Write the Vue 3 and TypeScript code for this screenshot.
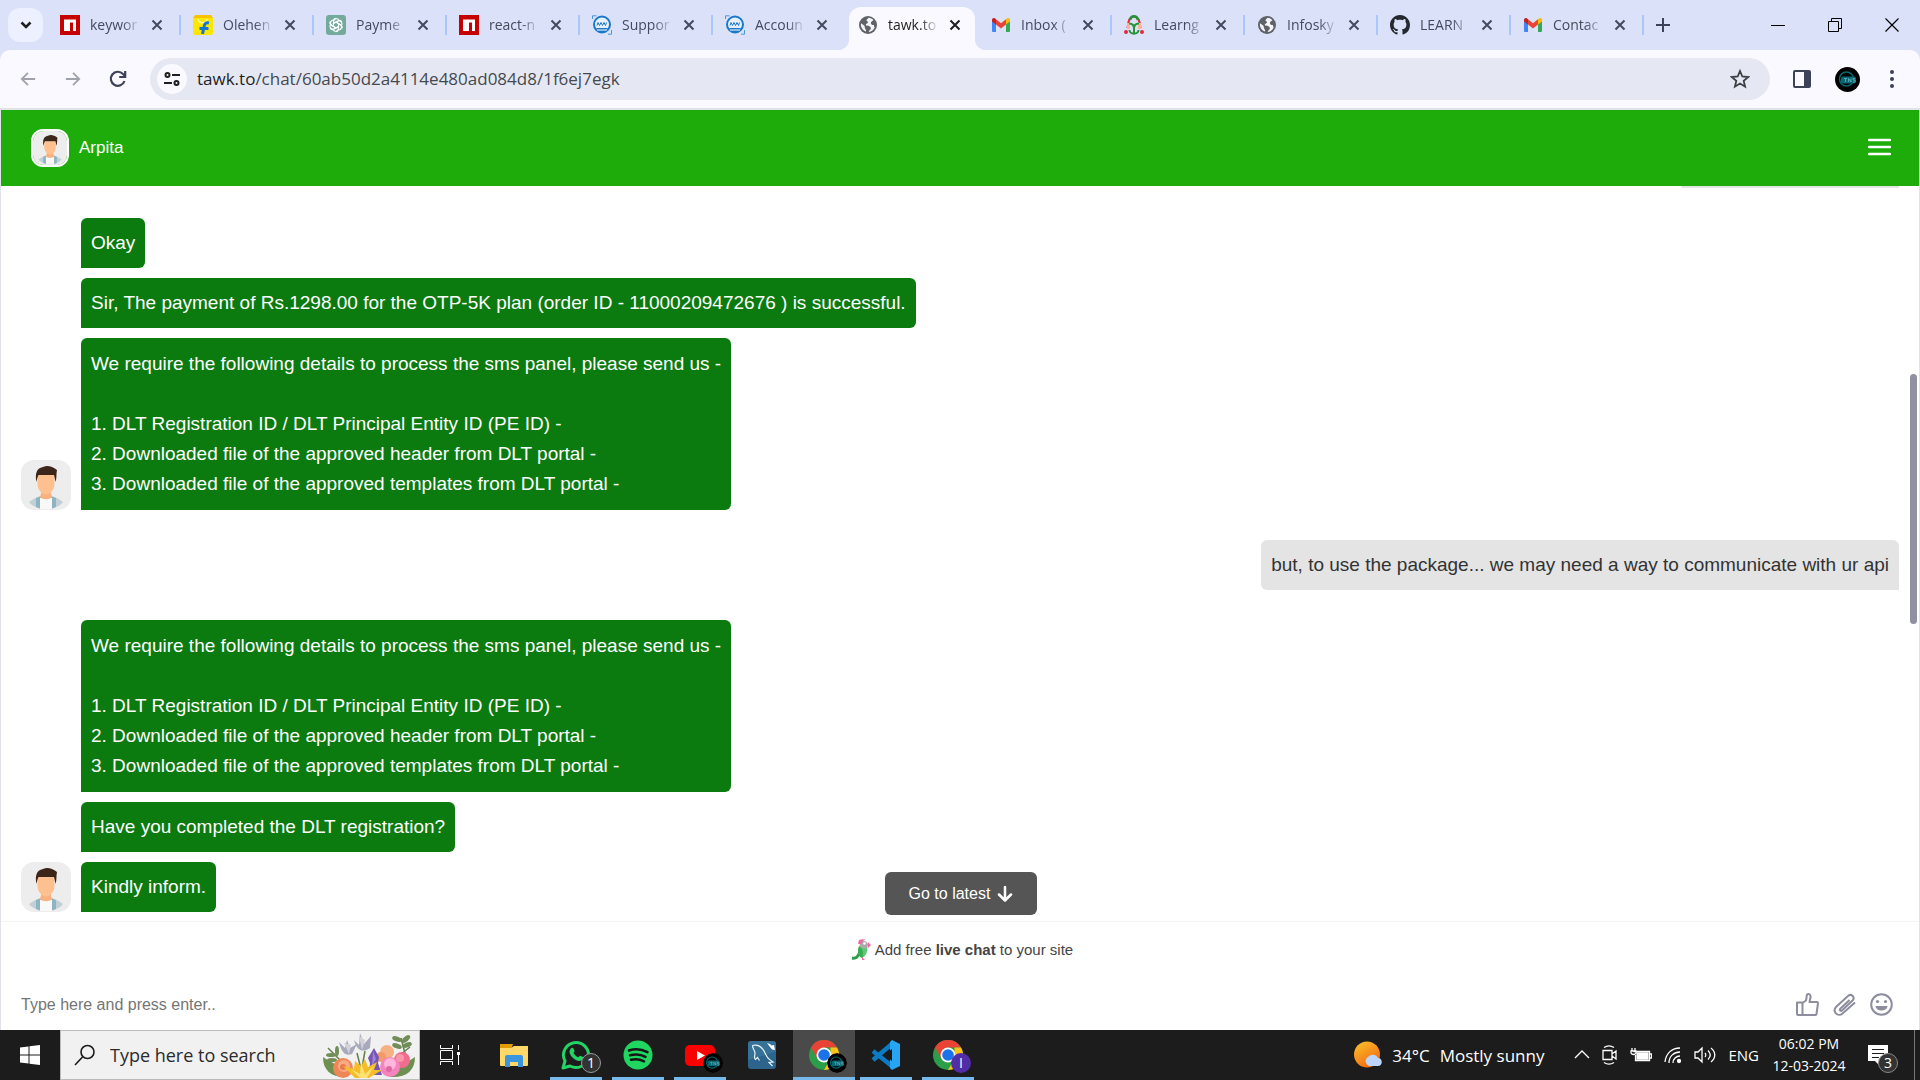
<script setup lang="ts">
interface Tab {
  icon: string
  title: string
  active?: boolean
}

interface Group {
  side: 'agent' | 'visitor'
  messages: string[][]
}

interface TaskItem {
  icon: string
  label: string
  running?: boolean
  active?: boolean
  badge?: 'count' | 'profile' | 'letter'
}

const tabs: Tab[] = [
  { icon: 'npm', title: 'keywor' },
  { icon: 'flipkart', title: 'Olehen' },
  { icon: 'openai', title: 'Payme' },
  { icon: 'npm', title: 'react-n' },
  { icon: 'sms', title: 'Suppor' },
  { icon: 'sms', title: 'Accoun' },
  { icon: 'globe', title: 'tawk.to', active: true },
  { icon: 'gmail', title: 'Inbox (' },
  { icon: 'learn', title: 'Learng' },
  { icon: 'globe', title: 'Infosky' },
  { icon: 'github', title: 'LEARN' },
  { icon: 'gmail', title: 'Contac' },
]

const details: string[] = [
  'We require the following details to process the sms panel, please send us -',
  '',
  '1. DLT Registration ID / DLT Principal Entity ID (PE ID) -',
  '2. Downloaded file of the approved header from DLT portal -',
  '3. Downloaded file of the approved templates from DLT portal -',
]

const groups: Group[] = [
  {
    side: 'agent',
    messages: [
      ['Okay'],
      ['Sir, The payment of Rs.1298.00 for the OTP-5K plan (order ID - 11000209472676 ) is successful.'],
      details,
    ],
  },
  {
    side: 'visitor',
    messages: [['but, to use the package... we may need a way to communicate with ur api']],
  },
  {
    side: 'agent',
    messages: [details, ['Have you completed the DLT registration?'], ['Kindly inform.']],
  },
]

const tasks: TaskItem[] = [
  { icon: 'explorer', label: 'File Explorer' },
  { icon: 'whatsapp', label: 'WhatsApp', running: true, badge: 'count' },
  { icon: 'spotify', label: 'Spotify', running: true },
  { icon: 'youtube', label: 'YouTube', running: true, badge: 'profile' },
  { icon: 'mysql', label: 'MySQL Workbench' },
  { icon: 'chrome', label: 'Google Chrome', running: true, active: true, badge: 'profile' },
  { icon: 'vscode', label: 'Visual Studio Code', running: true },
  { icon: 'chrome', label: 'Google Chrome', running: true, badge: 'letter' },
]
</script>

<template>
  <svg class="sprite" aria-hidden="true">
    <symbol id="npm" viewBox="0 0 20 20">
      <path fill="#c70000" d="M0 0h20v20H0z" />
      <path fill="#fff" d="M4 4.500h12v11.500h-3V7.500h-3V16H4z" />
    </symbol>
    <symbol id="flipkart" viewBox="0 0 20 20">
      <path fill="#ffe600" d="M0 3h20v15a2 2 0 0 1-2 2H2a2 2 0 0 1-2-2z" />
      <path fill="#f9c200" d="M2 0h16l2 3H0z" />
      <path d="M5 4c1 5 8 5 9 0" fill="none" stroke="#fff6a0" stroke-width="1.500" />
      <path d="M16 8c-3-.8-4.500.5-5 4l-1.500 7M6.500 13.500h9" fill="none" stroke="#1275d8" stroke-width="3" />
    </symbol>
    <symbol id="openai" viewBox="0 0 20 20">
      <rect width="20" height="20" rx="3" fill="#74aa9c" />
      <g fill="none" stroke="#fff" stroke-width="1.100">
        <path id="petal" d="M7.500 12V6.800a3 3 0 0 1 5.300-1.900M7.500 8.500l4.500-2.600a3 3 0 0 1 4 1" />
        <use href="#petal" transform="rotate(60 10 10)" />
        <use href="#petal" transform="rotate(120 10 10)" />
        <use href="#petal" transform="rotate(180 10 10)" />
        <use href="#petal" transform="rotate(240 10 10)" />
        <use href="#petal" transform="rotate(300 10 10)" />
      </g>
    </symbol>
    <symbol id="sms" viewBox="0 0 20 20">
      <circle cx="10" cy="9.500" r="8" fill="#e6f0fb" stroke="#1b78c8" stroke-width="2" />
      <path d="M4 13h12l-3 4H7z" fill="#1b78c8" />
      <path d="M.5 4V.8h4M16 19.200h3.500V15" fill="none" stroke="#4b97d8" />
      <path d="M5 10.500l1-3 1.500 3L9 7.500l1.500 3 1.500-3 1.500 3 1-3" fill="none" stroke="#1b78c8" />
      <path d="M5 15h10" stroke="#fff" />
    </symbol>
    <symbol id="globe" viewBox="0 0 20 20">
      <circle cx="10" cy="10" r="9" fill="#5f6368" />
      <path fill="#f4f5fa" d="M10.500 2.800c-.5 1-2 1.500-2 2.700 0 .9 1.500.6 1.500 1.700 0 1.400-2.200 1-2.200 2.500 0 1.300 2.400.7 3.600 1.500 1.200.7 1.800 1.500 1.300 2.900-.5 1.200-1.800 1.400-2 3 2.900-.4 5-2.300 6-4.800-.6-.6-.9-1.400-.8-2.300-1.600.2-3-.5-3-2 0-1.400 1.600-1.600 2.500-2.900-1.300-1.400-3-2.200-4.900-2.300zM3 8.200c-.3 1.600 0 3.300.8 4.800 1 1.800 2.500 3 4.200 3.600.3-1.600-.5-2.300-1-3.300-.4-1-.1-1.900-.9-2.700z" />
    </symbol>
    <symbol id="gmail" viewBox="0 0 20 20">
      <path fill="#4285f4" d="M1 5v11a1 1 0 0 0 1 1h3V8z" />
      <path fill="#34a853" d="M19 5v11a1 1 0 0 1-1 1h-3V8z" />
      <path fill="#ea4335" d="M5 4.200l5 4 5-4v5.300l-5 4-5-4z" />
      <path fill="#c5221f" d="M1 5c0-2 2.200-2.800 4-.8v5.300L1 6.400z" />
      <path fill="#fbbc04" d="M19 5c0-2-2.200-2.800-4-.8v5.300l4-3.100z" />
    </symbol>
    <symbol id="learn" viewBox="0 0 20 20">
      <path d="M3.500 13C4 6 6 1.500 10 1.500S16 6 16.500 13" fill="none" stroke="#e3293c" stroke-width="2" />
      <path d="M6 5c1-5 7-5 8 0" fill="none" stroke="#249537" stroke-width="2.500" />
      <path d="M4.500 8v6M15.500 8v6" stroke="#ffb394" stroke-width="3" />
      <path d="M5 8.500c3 0 5 2 5 5 0-3 2-5 5-5M10 11v8M5.500 15c0 5 9 5 9 0" fill="none" stroke="#249537" stroke-width="2" />
      <circle cx="2" cy="17" r="2" fill="#e3293c" /><circle cx="18" cy="17" r="2" fill="#e3293c" />
    </symbol>
    <symbol id="github" viewBox="0 0 16 16">
      <path fill="#24292f" d="M8 0C3.580 0 0 3.580 0 8c0 3.540 2.290 6.530 5.470 7.590.4.070.55-.17.55-.38 0-.19-.01-.82-.01-1.490-2.010.37-2.530-.49-2.690-.94-.09-.23-.48-.94-.82-1.130-.28-.15-.68-.52-.01-.53.63-.01 1.080.58 1.230.82.72 1.210 1.870.87 2.330.66.07-.52.28-.87.51-1.070-1.780-.2-3.640-.89-3.640-3.950 0-.87.31-1.590.82-2.150-.08-.2-.36-1.020.08-2.120 0 0 .67-.21 2.200.82.64-.18 1.320-.27 2-.27s1.360.09 2 .27c1.530-1.040 2.200-.82 2.200-.82.44 1.100.16 1.920.08 2.120.51.56.82 1.270.82 2.150 0 3.070-1.870 3.750-3.650 3.950.29.25.54.73.54 1.480 0 1.070-.01 1.930-.01 2.200 0 .21.15.46.55.38A8 8 0 0 0 16 8c0-4.420-3.580-8-8-8z" />
    </symbol>
    <symbol id="close" viewBox="0 0 12 12">
      <path d="M1.500 1.500l9 9M10.500 1.500l-9 9" stroke="currentColor" stroke-width="2" />
    </symbol>
    <symbol id="person" viewBox="0 0 50 50">
      <path fill="#ededed" d="M0 0h50v50H0z" />
      <path fill="#c1d0d6" d="M8 42c4-3 8-5 12-6h10c4 1 8 3 12 6-3 4-8 6-13 6.500h-8C16 48 11 46 8 42z" />
      <path fill="#8fb4c1" d="M15 38l5-2v13l-5-2zM35 38l-5-2v13l5-2z" />
      <path fill="#f8f8f8" d="M19 38h12v11H19z" />
      <path fill="#f9b27f" d="M21 30h8l2 7c-2 3-10 3-12 0z" />
      <path fill="#ffc090" d="M16.500 15h17v9c0 6-5 10.500-8.500 10.500S16.500 30 16.500 24z" />
      <path fill="#3c2519" d="M15.500 22C14 15 15 8 22 7c4-2 9-1 14 3-1 4 0 8-1.500 12-.5-3-1-5-1.500-7H17.500c-1 2-1.500 4-2 7z" />
    </symbol>
    <symbol id="profile" viewBox="0 0 25 25">
      <circle cx="12.500" cy="12.500" r="12.500" fill="#000" />
      <circle cx="11.500" cy="12" r="7" fill="none" stroke="#0b6873" stroke-width="1.500" />
      <rect x="6" y="9.500" width="15" height="7" rx="2" fill="#066976" />
      <path d="M9 11.500h3m-1.500 0V15M13.500 15v-3.500L16 15v-3.500M20 11.500h-2V13h2v2h-2" fill="none" stroke="#7db9bf" stroke-width=".7" />
    </symbol>
    <symbol id="explorer" viewBox="0 0 30 30">
      <path fill="#e29c00" d="M1 4h13l-2 6H1z" />
      <path fill="#ffd867" d="M1 8h11l3-2h14v19a1 1 0 0 1-1 1H2a1 1 0 0 1-1-1z" />
      <path fill="#3a95de" d="M8 15h14a2 2 0 0 1 2 2v10h-5v-5h-8v5H6V17a2 2 0 0 1 2-2z" />
    </symbol>
    <symbol id="whatsapp" viewBox="0 0 30 30">
      <path d="M2 28l2-7A12.500 12.500 0 1 1 9 26z" fill="none" stroke="#22d366" stroke-width="3" stroke-linejoin="round" />
      <path fill="#22d366" d="M10.500 8c.8-.6 1.500-.3 2 .6l1 2.400c.2.800-.9 1.500-.9 2 .8 1.800 2.600 3.500 4.600 4.200.7 0 1.300-1.700 2.100-1.500l2.700 1.400c1 2-1.500 4-3.500 3.900C13.500 20.500 9 16 8.500 12c0-1.500.8-3.300 2-4z" />
    </symbol>
    <symbol id="spotify" viewBox="0 0 30 30">
      <circle cx="15" cy="15" r="14.500" fill="#1fd760" />
      <path d="M6 10.500c6-2 13-1.300 18.500 1.700M7 15.300c5.500-1.500 11-1 15.500 1.600M8 19.800c4.500-1.200 9-.7 13 1.500" fill="none" stroke="#151515" stroke-width="2.500" stroke-linecap="round" />
    </symbol>
    <symbol id="youtube" viewBox="0 0 30 30">
      <rect y="5" width="30" height="21" rx="5" fill="#f00" />
      <path fill="#fff" d="M12 11v9l8-4.500z" />
    </symbol>
    <symbol id="mysql" viewBox="0 0 30 30">
      <rect x="1" y="1" width="28" height="28" rx="3" fill="#2c648b" />
      <path fill="#3d7aa0" d="M1 4a3 3 0 0 1 3-3h22a3 3 0 0 1 3 3v8L1 20z" opacity=".6" />
      <path d="M5.500 5.500c5-1.500 9.500 1 12.500 7.500 2 4 3 6 8 9l-4 .5 3.500 3.500M5.500 5.500c0 3 2.500 5 2.500 8 0 2-1.500 4 .5 6l2-2 2 3" fill="none" stroke="#e9f3f8" stroke-width="1.200" />
      <path fill="#fff" d="M20 3l3 1 1.500 1.500L27 5l1 5-3-.5-2-2.500z" />
    </symbol>
    <symbol id="chrome" viewBox="0 0 30 30">
      <circle cx="15" cy="15" r="15" fill="#2a9e48" />
      <path fill="#ea4335" d="M2 7.500a15 15 0 0 1 26 0H15L8.500 18.700z" />
      <path fill="#fbc116" d="M28 7.500A15 15 0 0 1 15 30l6.500-11.200V7.500z" />
      <circle cx="15" cy="15" r="7.500" fill="#fff" /><circle cx="15" cy="15" r="5.800" fill="#1a73e8" />
    </symbol>
    <symbol id="vscode" viewBox="0 0 30 30">
      <path d="M2 11l20 16M2 20L22 3" stroke="#0b7bc4" stroke-width="4.500" />
      <path fill="#27a5f3" d="M21 0l8 4v22l-8 4-2-2V2z" />
      <path fill="#1b1b1b" d="M21 9v12l-8-6z" />
    </symbol>
  </svg>

  <div class="screen">
    <header class="tabstrip">
      <button class="tab-search" aria-label="Search tabs">
        <svg width="12" height="12" viewBox="0 0 12 12"><path d="M1.500 3.500L6 8l4.500-4.500" fill="none" stroke="#1f1f1f" stroke-width="2.500" /></svg>
      </button>
      <nav class="tabs">
        <div v-for="(tab, i) in tabs" :key="i" class="tab" :class="{ active: tab.active, 'before-active': tabs[i + 1]?.active }">
          <svg class="favicon"><use :href="'#' + tab.icon" /></svg>
          <button class="tab-title">{{ tab.title }}</button>
          <button class="tab-close" aria-label="Close tab"><svg width="12" height="12"><use href="#close" /></svg></button>
        </div>
      </nav>
      <button class="new-tab" aria-label="New tab">
        <svg width="14" height="14" viewBox="0 0 14 14"><path d="M7 0v14M0 7h14" stroke="#3c4257" stroke-width="2" /></svg>
      </button>
      <div class="window-buttons">
        <button aria-label="Minimize"><svg width="14" height="14" viewBox="0 0 14 14"><path d="M0 7.500h14" stroke="#000" /></svg></button>
        <button aria-label="Restore"><svg width="14" height="14" viewBox="0 0 14 14"><path d="M.5 3.500h10v10H.5zM3.500 3V.5h10v10H11" fill="none" stroke="#000" /></svg></button>
        <button aria-label="Close"><svg width="14" height="14" viewBox="0 0 14 14"><path d="M.5.5l13 13M13.500.5l-13 13" stroke="#000" stroke-width="1.200" /></svg></button>
      </div>
    </header>

    <div class="toolbar">
      <div class="nav-buttons">
        <button aria-label="Back"><svg width="16" height="16" viewBox="0 0 18 18"><path d="M17 9H2.500M9 2L2 9l7 7" fill="none" stroke="#a0a3ad" stroke-width="2" /></svg></button>
        <button aria-label="Forward"><svg width="16" height="16" viewBox="0 0 18 18"><path d="M1 9h14.500M9 2l7 7-7 7" fill="none" stroke="#a0a3ad" stroke-width="2" /></svg></button>
        <button aria-label="Reload"><svg width="18" height="18" viewBox="0 0 18 18"><path d="M15.500 11A7 7 0 1 1 14 4l2 2M16.200 1v6h-6" fill="none" stroke="#3c4257" stroke-width="2.200" /></svg></button>
      </div>
      <div class="omnibox">
        <button class="site-info" aria-label="Site information">
          <svg width="16" height="16" viewBox="0 0 16 16" fill="none" stroke="#1f1f1f" stroke-width="2"><circle cx="3.500" cy="4" r="2" /><path d="M8 4h8M0 12h8" /><circle cx="12.500" cy="12" r="2" /></svg>
        </button>
        <a class="url" href="#"><span class="host">tawk.to</span>/chat/60ab50d2a4114e480ad084d8/1f6ej7egk</a>
        <button class="star" aria-label="Bookmark"><svg width="20" height="20" viewBox="0 0 20 20"><path d="M10 2l2.300 5.500 5.900.5-4.500 3.900 1.400 5.800L10 14.600l-5.100 3.100 1.400-5.800L1.800 8l5.900-.5z" fill="none" stroke="#3c4043" stroke-width="1.800" /></svg></button>
      </div>
      <div class="toolbar-actions">
        <button aria-label="Side panel"><svg width="18" height="18" viewBox="0 0 18 18"><rect x="1" y="1" width="16" height="16" rx="1" fill="none" stroke="#3c4257" stroke-width="2" /><path d="M11 1h6v16h-6z" fill="#3c4257" /></svg></button>
        <button aria-label="Profile"><svg width="25" height="25"><use href="#profile" /></svg></button>
        <button aria-label="Menu"><svg width="4" height="18" viewBox="0 0 4 18" fill="#3c4257"><circle cx="2" cy="2" r="2" /><circle cx="2" cy="9" r="2" /><circle cx="2" cy="16" r="2" /></svg></button>
      </div>
    </div>

    <main class="chat">
      <div class="chat-head">
        <svg class="head-avatar"><use href="#person" /></svg>
        <span class="agent-name">Arpita</span>
        <button class="menu" aria-label="Chat menu"><svg width="23" height="18" viewBox="0 0 23 18"><path d="M1 2h21M1 9h21M1 16h21" stroke="#fff" stroke-width="2.500" stroke-linecap="round" /></svg></button>
      </div>

      <div class="conversation">
        <div class="scrolled-bubble"></div>
        <section v-for="(group, g) in groups" :key="g" class="group" :class="group.side">
          <svg v-if="group.side === 'agent'" class="avatar"><use href="#person" /></svg>
          <div class="stack">
            <div v-for="(lines, m) in group.messages" :key="m" class="bubble" :class="{ long: lines.length > 1 }">
              <p v-for="(line, l) in lines" :key="l">{{ line }}</p>
            </div>
          </div>
        </section>
        <div class="scrollbar"></div>
        <button class="latest">
          Go to latest
          <svg width="16" height="16" viewBox="0 0 16 16"><path d="M8 1v13M2 8.500l6 6 6-6" fill="none" stroke="#fff" stroke-width="2.500" stroke-linecap="round" stroke-linejoin="round" /></svg>
        </button>
      </div>

      <footer class="chat-foot">
        <a class="branding" href="#">
          <svg width="20" height="22" viewBox="0 0 20 22">
            <path d="M1 19c5 1 6-2 8-6" fill="none" stroke="#2a9e48" stroke-width="3" />
            <path fill="#5fc878" d="M8 7l8-1c1 5 0 11-5 13-4-2-5-7-3-12z" /><path fill="#35ad50" d="M8 8c4 1 5 6 3 11-4-2-5-6-3-11z" />
            <path fill="#a9aaa9" d="M9 3c3-2 8-1 8 3 0 3-3 4-6 3-2-1-3-3-2-6z" /><circle cx="13.500" cy="4.500" r="1.300" fill="#fff" />
            <path fill="#f069a5" d="M8 1c2-1 5-1 7 0-3 0-4 2-5 4H7zM17 3l3 3-3 3zM11 18l3 3h-3z" />
          </svg>
          <span>Add free <b>live chat</b> to your site</span>
        </a>
        <form class="composer" @submit.prevent>
          <input type="text" placeholder="Type here and press enter.." aria-label="Message" />
          <button type="button" aria-label="Rate"><svg width="23" height="23" viewBox="0 0 23 23"><path d="M1 9.500h5.500V22H2a1 1 0 0 1-1-1zM6.500 10L10 7.500 11 1.500c2-1.300 4 .5 3.500 3L13.500 9H21a1 1 0 0 1 1 1l-1.500 11a1 1 0 0 1-1 1h-13z" /></svg></button>
          <button type="button" aria-label="Attach"><svg width="23" height="23" viewBox="0 0 23 23"><path d="M16.500 7l-9 8.500c-1.500 1.500.2 3.200 1.700 1.700L19.500 7.500c3-3-1-7.500-4.500-4.500L3.500 13.500c-5 5 1.500 11 6 7L22 9.500" /></svg></button>
          <button type="button" aria-label="Emoji"><svg width="23" height="23" viewBox="0 0 23 23"><circle cx="11.500" cy="11.500" r="10.300" /><path class="solid" d="M5.500 13h12c-.5 6-11.500 6-12 0z" /><circle class="solid" cx="7.500" cy="8.500" r="1.600" /><circle class="solid" cx="15.500" cy="8.500" r="1.600" /></svg></button>
        </form>
      </footer>
    </main>

    <div class="taskbar">
      <button class="start" aria-label="Start"><svg width="20" height="20" viewBox="0 0 20 20" fill="#fff"><path d="M0 2.500L8.500 1.500v8H0zM9.500 1.300L20 0v9.500H9.500zM0 10.500h8.500v8L0 17.500zM9.500 10.500H20V20l-10.500-1.300z" /></svg></button>
      <label class="search">
        <svg width="22" height="22" viewBox="0 0 22 22"><path d="M1 21l7.500-8" stroke="#1b1b1b" stroke-width="1.600" /><circle cx="13.500" cy="8" r="6.500" fill="none" stroke="#1b1b1b" stroke-width="1.600" /></svg>
        <input type="text" placeholder="Type here to search" aria-label="Search" />
        <svg class="flowers" width="93" height="46" viewBox="0 0 93 46">
          <path fill="#6d8f4f" d="M0 24c0 14 9 21 25 20C20 33 10 31 0 24zM92 24c0 14-9 21-25 20 5-11 15-13 25-20z" />
          <path d="M5 15l16 16M34 20l5 20M42 18l-4 22M78 5l6 23M73 25l14-11" stroke="#64804c" stroke-width="1.500" />
          <g fill="#718d58"><ellipse cx="8" cy="22" rx="5" ry="2" /><ellipse cx="14" cy="18" rx="2" ry="5" /><ellipse cx="9" cy="27" rx="5" ry="2" /><ellipse cx="74" cy="6" rx="5" ry="2.500" transform="rotate(20 74 6)" /><ellipse cx="83" cy="6" rx="5" ry="2.500" transform="rotate(-40 83 6)" /><ellipse cx="74" cy="13" rx="5" ry="2.500" transform="rotate(20 74 13)" /><ellipse cx="84" cy="12" rx="5" ry="2.500" transform="rotate(-20 84 12)" /></g>
          <path fill="#a7a9bd" d="M16 9l6 6 2-8 3 8 7-4-5 10c-6 2-10 0-13-12zM31 7l5 5 1-12 4 11 7-8-1 12c-7 5-13 3-16-8z" />
          <path fill="#d3d0d8" d="M21 10l5 11 2-9zM36 3l3 14 3-10z" />
          <circle cx="64" cy="19" r="7" fill="#f7b082" /><circle cx="58" cy="24" r="5" fill="#f29b68" />
          <circle cx="79" cy="27" r="8" fill="#f06d8d" /><circle cx="77" cy="25" r="4" fill="#fb95a9" />
          <circle cx="20" cy="35" r="10" fill="#ee8758" /><circle cx="21" cy="33" r="6" fill="#f8aa82" /><circle cx="20" cy="34" r="3" fill="#e8794d" />
          <path fill="#7656b4" d="M51 15l5 9-1 6 4 12H46l1-12-2-5z" /><path fill="#a083d3" d="M50 18l3 8-4 7z" />
          <circle cx="67" cy="34" r="10" fill="#f384bd" /><circle cx="67" cy="31" r="6" fill="#ffb6dc" /><circle cx="66" cy="36" r="3" fill="#e268a4" />
          <path fill="#f4bd29" d="M20 33l11 3 1-8 6 5 4-7 3 8 9-5-3 8 8 0-13 8H32z" /><path fill="#ffe071" d="M28 36l9 5 1-11 4 11 9-8-7 12h-7z" />
        </svg>
      </label>
      <button class="task-view" aria-label="Task view"><svg width="21" height="20" viewBox="0 0 21 20" fill="none" stroke="#fff"><path d="M.5 0v3.500h12V0M.5 20v-3.500h12V20M.5 5.500h12v9H.5zM18.500 0v5M18.500 10v10" /><path d="M17 7h3v3h-3z" fill="#fff" stroke="none" /></svg></button>
      <div class="tasks">
        <button v-for="(task, i) in tasks" :key="i" class="task" :class="{ running: task.running, current: task.active }" :aria-label="task.label">
          <svg class="task-icon"><use :href="'#' + task.icon" /></svg>
          <span v-if="task.badge === 'count'" class="badge count">1</span>
          <svg v-else-if="task.badge === 'profile'" class="badge"><use href="#profile" /></svg>
          <span v-else-if="task.badge === 'letter'" class="badge letter">I</span>
        </button>
      </div>
      <div class="tray">
        <button class="weather">
          <svg width="28" height="28" viewBox="0 0 28 28"><defs><linearGradient id="sun" x2="0.600" y2="1"><stop stop-color="#f9c52c" /><stop offset="1" stop-color="#f46a10" /></linearGradient></defs><circle cx="13" cy="13.500" r="13" fill="url(#sun)" /><path fill="#bcd5fa" d="M15 25a5 5 0 0 1-1-9 6 6 0 0 1 10 1c5 0 5 8 0 8z" /></svg>
          <span>34°C</span><span>Mostly sunny</span>
        </button>
        <svg class="tray-icon" width="16" height="20" viewBox="0 0 16 20"><path d="M1 13l7-7 7 7" /></svg>
        <svg class="tray-icon" width="16" height="20" viewBox="0 0 16 20"><path d="M1 5.500h9v9H1zM10 9l4-3v8l-4-3M2 2.500c3-2 7-2 10 0M2 17.500c3 2 7 2 10 0" /></svg>
        <svg class="tray-icon" width="22" height="20" viewBox="0 0 22 20"><path d="M3.500 6.500h16v9h-14V10M2 3v3M5 3v3M1 6h5v2c-1 2-4 2-5 0zM20 9h1.500v4H20" /><path d="M7 8h11v6H7z" fill="#fff" /></svg>
        <svg class="tray-icon" width="18" height="20" viewBox="0 0 18 20"><path d="M1 17C2 8 8 3 16 3M5 18c0-7 5-11 11-11M9 18c0-4 3-7 7-7" /><circle cx="15" cy="16" r="1.500" fill="#fff" /></svg>
        <svg class="tray-icon" width="22" height="20" viewBox="0 0 22 20"><path d="M1 7h3l4-4v14l-4-4H1zM11 8c1 1 1 3 0 4M14 5.500c3 3 3 6 0 9M17 3c5 4 5 10 0 14" /></svg>
        <span class="lang">ENG</span>
        <div class="clock"><time>06:02 PM</time><time>12-03-2024</time></div>
        <button class="notices" aria-label="Notifications">
          <svg width="20" height="21" viewBox="0 0 20 21"><path fill="#fff" d="M0 0h20v16h-8v5l-5-5H0z" /><path d="M4 4.500h12M4 8.500h12M4 12.500h7" stroke="#1c1c1c" /></svg>
          <span class="notice-count">3</span>
        </button>
        <div class="show-desktop"></div>
      </div>
    </div>
  </div>
</template>

<style>
body {
  margin: 0;
}
</style>

<style scoped>
.sprite {
  position: absolute;
  width: 0;
  height: 0;
}

.screen {
  display: flex;
  flex-direction: column;
  height: 100vh;
  overflow: hidden;
  background: #dae1f9;
  font-family: "Open Sans", sans-serif;
}

.screen * {
  box-sizing: border-box;
}

button {
  display: flex;
  align-items: center;
  justify-content: center;
  padding: 0;
  border: 0;
  background: none;
  color: inherit;
  font: inherit;
}

svg {
  display: block;
  flex: none;
}

input {
  min-width: 0;
  padding: 0;
  border: 0;
  outline: 0;
  background: none;
  font: inherit;
}

/* Tab strip */
.tabstrip {
  display: flex;
  flex: none;
  align-items: center;
  height: 50px;
  padding-left: 8px;
}

.tab-search {
  flex: none;
  width: 35px;
  height: 34px;
  margin-right: 5px;
  border-radius: 12px;
  background: #ecf0ff;
}

.tabs {
  display: flex;
  flex: 0 1 1596px;
  min-width: 0;
  height: 50px;
}

.tab {
  position: relative;
  display: flex;
  flex: 1 1 0;
  align-items: center;
  min-width: 0;
  padding: 0 18px 0 12px;
  color: #454a5d;
}

.tab::after {
  position: absolute;
  top: 15px;
  right: 0;
  width: 2px;
  height: 20px;
  background: #a8c7fa;
  content: "";
}

.tab.before-active::after {
  display: none;
}

.tab.active {
  z-index: 1;
  color: #1f1f1f;
}

.tab.active::before {
  position: absolute;
  inset: 7px 4px 0 3px;
  border-radius: 12px 12px 0 0;
  background: #faf9ff;
  content: "";
}

/* Curved feet that join the active tab to the toolbar */
.tab.active::after {
  top: auto;
  right: -8px;
  bottom: 0;
  left: -9px;
  width: auto;
  height: 12px;
  background:
    radial-gradient(circle at 0 0, transparent 12px, #faf9ff 13px) left / 12px 12px no-repeat,
    radial-gradient(circle at 100% 0, transparent 12px, #faf9ff 13px) right / 12px 12px no-repeat;
}

.favicon {
  position: relative;
  width: 20px;
  height: 20px;
}

.tab-title {
  position: relative;
  flex: 1;
  justify-content: flex-start;
  min-width: 0;
  margin: 0 8px 0 10px;
  overflow: hidden;
  font-size: 14px;
  line-height: 24px;
  white-space: nowrap;
  mask-image: linear-gradient(90deg, #000 60%, transparent 96%);
}

.tab-close {
  position: relative;
  flex: none;
}

.new-tab {
  flex: none;
  width: 38px;
  height: 34px;
}

.window-buttons {
  display: flex;
  flex: none;
  height: 50px;
  margin-left: auto;
}

.window-buttons button {
  width: 57px;
}

/* Toolbar */
.toolbar {
  display: flex;
  flex: none;
  align-items: center;
  height: 60px;
  padding: 0 26px 0 5px;
  border-bottom: 2px solid #e2e3ea;
  border-radius: 10px 10px 0 0;
  background: #faf9ff;
}

.nav-buttons {
  display: flex;
  flex: none;
  width: 145px;
}

.nav-buttons button {
  width: 45px;
}

.omnibox {
  display: flex;
  flex: 1;
  align-items: center;
  gap: 10px;
  height: 42px;
  padding: 0 20px 0 7px;
  border-radius: 21px;
  background: #e5e8f2;
}

.site-info {
  width: 30px;
  height: 30px;
  border-radius: 50%;
  background: #faf9ff;
}

.url {
  flex: 1;
  color: #454950;
  font-size: 17px;
  line-height: 24px;
  text-decoration: none;
}

.host {
  color: #1f1f1f;
}

.toolbar-actions {
  display: flex;
  align-items: center;
  gap: 24px;
  padding-left: 23px;
}

.toolbar-actions button:last-child {
  margin-left: 6px;
}

/* Chat page */
.chat {
  display: flex;
  flex: 1;
  flex-direction: column;
  min-height: 0;
  border: solid #e2e3ea;
  border-width: 0 1px;
  background: #fff;
  font-family: "Liberation Sans", Arial, sans-serif;
}

.chat-head {
  display: flex;
  flex: none;
  align-items: center;
  height: 76px;
  padding: 0 28px 0 30px;
  background: #1eac0b;
  color: #fff;
}

.head-avatar {
  width: 38px;
  height: 38px;
  border: 2px solid #fff;
  border-radius: 12px;
}

.agent-name {
  flex: 1;
  padding-left: 10px;
  font-size: 17px;
}

.menu {
  padding-bottom: 2px;
}

.conversation {
  position: relative;
  display: flex;
  flex: 1;
  flex-direction: column;
  gap: 30px;
  min-height: 0;
  padding: 0 20px;
  overflow: hidden;
}

.scrolled-bubble {
  flex: none;
  align-self: flex-end;
  width: 218px;
  height: 2px;
  border-radius: 0 0 0 2px;
  background: #e4e4e4;
}

.group {
  display: flex;
  flex: none;
  align-items: flex-end;
  gap: 10px;
}

.visitor {
  justify-content: flex-end;
}

.avatar {
  width: 50px;
  height: 50px;
  border-radius: 13px;
}

.stack {
  display: flex;
  flex-direction: column;
  align-items: flex-start;
  gap: 10px;
}

.bubble {
  padding: 10px;
  border-radius: 6px 6px 6px 0;
  background: #0b7a0f;
  color: #fff;
  font-size: 19px;
  line-height: 30px;
}

.bubble.long {
  padding: 11px 10px;
}

.visitor .bubble {
  border-radius: 6px 6px 0 6px;
  background: #e4e4e4;
  color: #333;
}

.bubble p {
  min-height: 30px;
  margin: 0;
}

.scrollbar {
  position: absolute;
  top: 25.6%;
  right: 2px;
  width: 7px;
  height: 34%;
  border-radius: 4px;
  background: #9090a0;
}

.latest {
  position: absolute;
  bottom: 6px;
  left: 50%;
  gap: 7px;
  width: 152px;
  height: 43px;
  margin-left: -75px;
  border-radius: 6px;
  background: #555;
  color: #fff;
  font-size: 16px;
}

.chat-foot {
  flex: none;
  border-top: 1px solid #f5f5f5;
}

.branding {
  display: flex;
  align-items: center;
  justify-content: center;
  gap: 4px;
  height: 55px;
  padding-left: 4px;
  color: #444;
  font-size: 15px;
  text-decoration: none;
}

.composer {
  display: flex;
  align-items: center;
  gap: 14px;
  height: 53px;
  padding: 2px 26px 0 20px;
}

.composer input {
  flex: 1;
  font-size: 16px;
}

.composer input::placeholder {
  color: #757575;
}

.composer svg {
  fill: none;
  stroke: #8d8d9f;
  stroke-width: 2;
  stroke-linejoin: round;
}

.composer .solid {
  fill: #8d8d9f;
  stroke: none;
}

/* Taskbar */
.taskbar {
  display: flex;
  flex: none;
  height: 50px;
  background: #1c1c1c;
  color: #fff;
}

.start,
.task-view {
  flex: none;
  width: 60px;
}

.search {
  display: flex;
  flex: none;
  align-items: center;
  gap: 14px;
  width: 360px;
  padding: 0 3px 0 13px;
  border: 1px solid #bbb;
  background: #f1f1f1;
}

.search input {
  flex: 1;
  font-size: 18px;
}

.search input::placeholder {
  color: #2b2b2b;
}

.flowers {
  align-self: flex-end;
}

.tasks {
  display: flex;
  padding-left: 3px;
}

.task {
  position: relative;
  width: 62px;
}

.task.current {
  background: #4a4a4a;
}

.task.running::after {
  position: absolute;
  right: 5px;
  bottom: 0;
  left: 5px;
  height: 3px;
  background: #76b9ed;
  content: "";
}

.task.current::after {
  right: 0;
  left: 0;
}

.task-icon {
  width: 30px;
  height: 30px;
}

.badge {
  position: absolute;
  right: 8px;
  bottom: 7px;
  width: 20px;
  height: 20px;
  border-radius: 50%;
  font-size: 14px;
  line-height: 20px;
  text-align: center;
}

.badge.count {
  right: 6px;
  border: 1px solid #999;
  background: #333;
  line-height: 18px;
}

.badge.letter {
  background: #512da8;
}

.tray {
  display: flex;
  align-items: center;
  gap: 12px;
  margin-left: auto;
}

.weather {
  gap: 10px;
  margin-right: 18px;
  font-size: 17px;
}

.tray-icon {
  fill: none;
  stroke: #fff;
  stroke-width: 1.300;
}

.lang {
  font-size: 15px;
}

.clock {
  display: flex;
  flex-direction: column;
  align-items: center;
  width: 76px;
  margin-right: 3px;
  font-size: 14px;
  line-height: 22px;
}

.notices {
  position: relative;
  width: 32px;
  height: 32px;
}

.notice-count {
  position: absolute;
  right: -4px;
  bottom: -2px;
  width: 20px;
  height: 20px;
  border: 1px solid #888;
  border-radius: 50%;
  background: #333;
  font-size: 14px;
  line-height: 18px;
}

.show-desktop {
  align-self: stretch;
  width: 6px;
  margin-left: 8px;
  border-left: 1px solid #777;
}
</style>
